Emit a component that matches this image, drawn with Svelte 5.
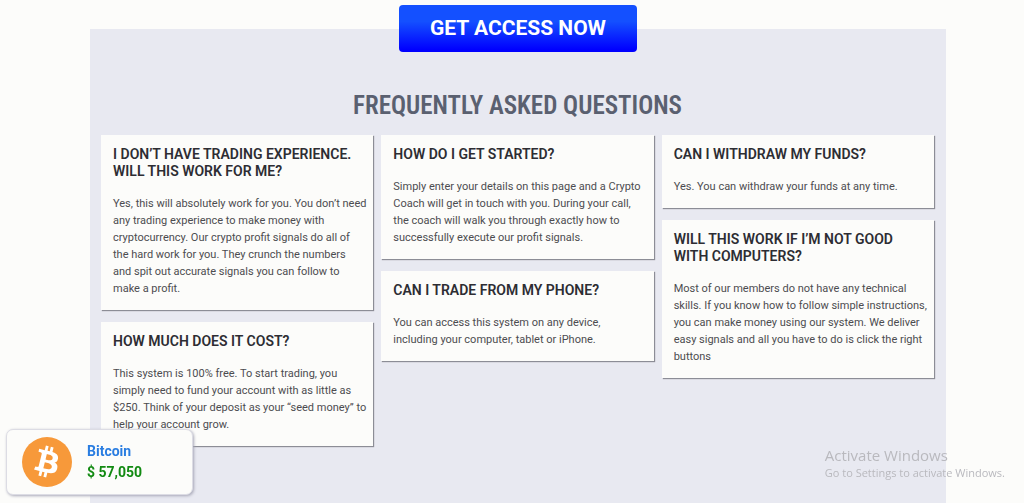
<script lang="ts">
  type Faq = { question: string; answer: string };

  // One list per column, cards stack on their own height
  const columns: Faq[][] = [
    [
      {
        question: "I don’t have trading experience. Will this work for me?",
        answer:
          "Yes, this will absolutely work for you. You don’t need any trading experience to make money with cryptocurrency. Our crypto profit signals do all of the hard work for you. They crunch the numbers and\u00a0spit out accurate signals you can follow to make\u00a0a profit.",
      },
      {
        question: "How much does it cost?",
        answer:
          "This system is 100% free. To start trading, you simply need to fund your account with as little as $250. Think of your deposit as your “seed money” to help your account grow.",
      },
    ],
    [
      {
        question: "How do I get started?",
        answer:
          "Simply enter your details on this page and a Crypto Coach will get in touch with you. During your call, the coach will walk you through exactly how to successfully execute our profit signals.",
      },
      {
        question: "Can I trade from my phone?",
        answer:
          "You can access this system on any device, including\u00a0your computer, tablet or iPhone.",
      },
    ],
    [
      {
        question: "Can I withdraw my funds?",
        answer: "Yes. You can withdraw your funds at any time.",
      },
      {
        question: "Will this work if I’m not good with computers?",
        answer:
          "Most of our members do not have any technical skills. If you know how to follow simple instructions, you can make money using our system. We deliver easy signals and all you have to do is click the right buttons",
      },
    ],
  ];

  const coin = { name: "Bitcoin", price: 57050 };
</script>

<div class="page">
  <button class="cta" type="button">GET ACCESS NOW</button>

  <section class="faq">
    <h2>Frequently Asked Questions</h2>
    <div class="columns">
      {#each columns as column}
        <div class="column">
          {#each column as item}
            <article class="card">
              <h3>{item.question}</h3>
              <p>{item.answer}</p>
            </article>
          {/each}
        </div>
      {/each}
    </div>
  </section>
</div>

<!-- Price popup -->
<aside class="ticker">
  <svg viewBox="0 0 64 64" aria-hidden="true">
    <circle cx="32" cy="32" r="32" fill="#f7993a" />
    <path
      fill="#fff"
      d="M46.1 27.4c.6-4.3-2.6-6.6-7.1-8.1l1.4-5.8-3.5-.9-1.4 5.6-2.8-.7 1.4-5.6-3.5-.9-1.5 5.8-2.2-.5-4.9-1.2-.9 3.7s2.6.6 2.6.6c1.4.4 1.7 1.3 1.6 2l-4 16c-.2.4-.6 1.1-1.6.8 0 .1-2.6-.6-2.6-.6l-1.7 4 4.6 1.2 2.5.6-1.5 5.9 3.5.9 1.5-5.8 2.8.7-1.4 5.8 3.5.9 1.5-5.9c6 1.1 10.5.7 12.4-4.7 1.5-4.4-.1-6.9-3.2-8.5 2.3-.5 4-2 4.5-5.3zm-8 11.3c-1.1 4.4-8.4 2-10.8 1.4l1.9-7.7c2.4.6 10 1.8 8.9 6.3zm1.1-11.3c-1 4-7.1 2-9.1 1.5l1.7-7c2 .5 8.4 1.4 7.4 5.5z"
    />
  </svg>
  <div class="quote">
    <span class="name">{coin.name}</span>
    <span class="price">$ {coin.price.toLocaleString("en-US")}</span>
  </div>
</aside>

<div class="watermark">
  <p class="title">Activate Windows</p>
  <p>Go to Settings to activate Windows.</p>
</div>

<style>
  :global(body) {
    background: #fcfcfa;
    font-family: Roboto, "Liberation Sans", sans-serif;
  }

  .page {
    display: flex;
    flex-direction: column;
    align-items: center;
    box-sizing: border-box;
    min-height: 100vh;
    padding: 5px 0 0 12px;
  }

  .cta {
    position: relative;
    z-index: 1;
    padding: 12px 31px;
    border: 0;
    border-radius: 4px;
    background: linear-gradient(#1450ff 0%, #1450ff 35%, #0000ff 95%);
    color: #fff;
    font-family: inherit;
    font-size: 21px;
    font-weight: 700;
    line-height: 23px;
    cursor: pointer;
  }

  .faq {
    flex: 1;
    box-sizing: border-box;
    width: 100%;
    max-width: 856px;
    margin-top: -23px;
    padding: 61px 12px 20px 11px;
    background: #e8e9f1;
  }

  h2 {
    margin: 0 0 13px;
    color: #5a6070;
    font-family: "Roboto Condensed", "Liberation Sans Narrow", Roboto, sans-serif;
    font-size: 25px;
    font-weight: 600;
    line-height: 32px;
    text-align: center;
    text-transform: uppercase;
  }

  .columns {
    display: grid;
    grid-template-columns: repeat(3, 1fr);
    gap: 8px;
  }

  .column {
    display: flex;
    flex-direction: column;
    gap: 12px;
  }

  .card {
    padding: 11px 6px 13px 12px;
    background: #fcfcfa;
    box-shadow: 1px 1px 1px #8c8d96;
  }

  h3 {
    margin: 0 0 15px;
    color: #2d2d33;
    font-size: 14px;
    font-weight: 600;
    line-height: 17px;
    text-transform: uppercase;
  }

  .card p {
    margin: 0;
    color: #4c4c50;
    font-size: 11px;
    line-height: 17px;
  }

  .ticker {
    position: fixed;
    bottom: 8px;
    left: 6px;
    z-index: 2;
    display: flex;
    align-items: center;
    gap: 15px;
    box-sizing: border-box;
    width: 187px;
    padding: 7px 15px;
    border: 1px solid #dcdce4;
    border-radius: 7px;
    background: #fcfcfa;
    box-shadow: 1px 1px 3px #a8a8b8;
  }

  .ticker svg {
    width: 50px;
    height: 50px;
  }

  .quote {
    display: flex;
    flex-direction: column;
    font-size: 14px;
    font-weight: 700;
    line-height: 21px;
  }

  .name {
    color: #2a7de1;
  }

  .price {
    color: #128a12;
  }

  .watermark {
    position: fixed;
    right: 19px;
    bottom: 21px;
    z-index: 3;
    color: #b9b9be;
    font-family: "Open Sans", "Noto Sans", sans-serif;
    pointer-events: none;
  }

  .watermark p {
    margin: 0;
    font-size: 11px;
    line-height: 18px;
  }

  .watermark .title {
    font-size: 15px;
  }

  @media (max-width: 700px) {
    .columns {
      grid-template-columns: 1fr;
    }
  }
</style>
